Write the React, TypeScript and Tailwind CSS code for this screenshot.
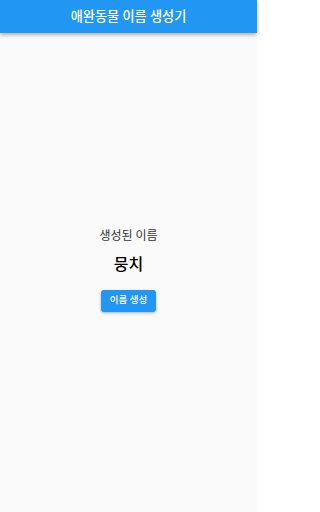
export default function App() {
  return (
    <div
      className="flex h-[512px] w-[257px] flex-col bg-[#fafafa]"
      style={{ fontFamily: 'Roboto, "Noto Sans CJK KR", sans-serif' }}
    >
      <header className="z-10 flex h-[33px] shrink-0 items-center justify-center bg-[#2196f3] shadow-[0_2px_4px_rgba(0,0,0,0.3)]">
        <h1 className="text-[13.2px] font-medium text-white">애완동물 이름 생성기</h1>
      </header>
      <main className="flex flex-1 flex-col items-center justify-center pb-[6px]">
        <p className="text-[12px] leading-[16px] text-[#333]">생성된 이름</p>
        <p className="mt-[10px] text-[16px] font-medium leading-[22px] text-black">뭉치</p>
        <button className="mt-[14px] h-[22px] rounded-[3px] bg-[#2196f3] px-[9px] text-[9.5px] font-medium text-white shadow-[0_1px_3px_rgba(0,0,0,0.3)]">
          이름 생성
        </button>
      </main>
    </div>
  );
}
